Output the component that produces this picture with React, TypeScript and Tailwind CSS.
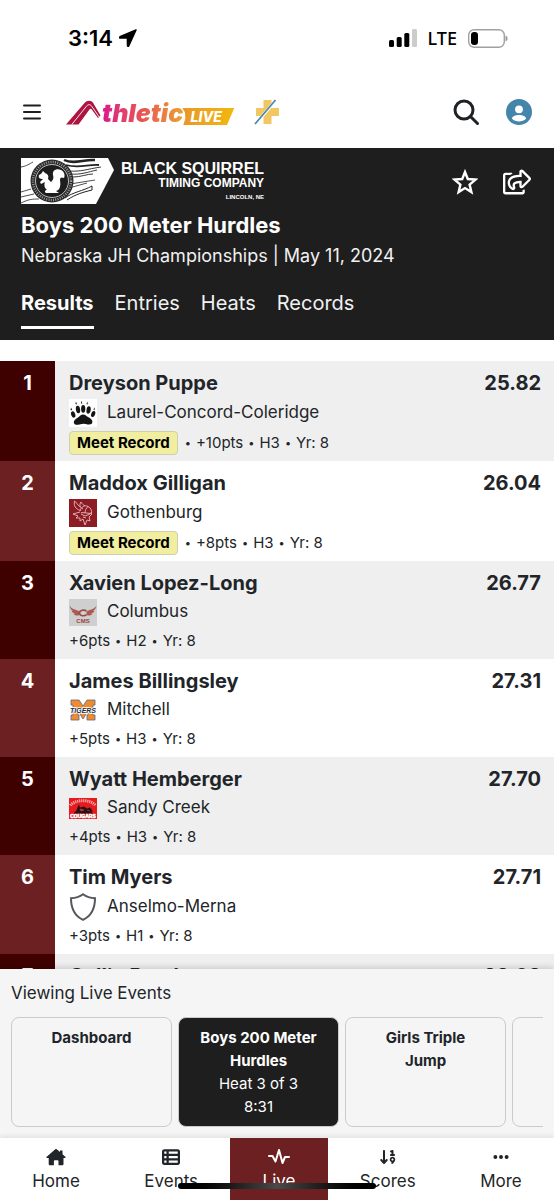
import React from "react";
import { FaRegShareSquare } from "react-icons/fa";
import { FaTableList, FaArrowDown19, FaEllipsis } from "react-icons/fa6";

type Result = {
  place: number;
  name: string;
  school: string;
  time: string;
  details: string[];
  record?: boolean;
  logo: React.ReactNode;
  compact?: boolean;
};

const PawLogo = () => (
  <svg viewBox="0 0 28 28" className="size-7">
    <rect width="28" height="28" fill="#fff" />
    <g fill="#151515">
      <path d="M14 15.500c2.200 0 3.100 1.400 5 2.600 2.600 1.500 4.600 2.600 4.400 5-.2 2.300-2.400 2.900-4.700 2.300-3-.8-5.200-.8-8.200.1C7.600 26.300 5 25.900 4.800 23.500c-.2-2.300 2-3.300 4.200-4.900 1.900-1.400 2.800-3.100 5-3.100z" />
      <ellipse cx="4.200" cy="15.500" rx="2" ry="3.200" transform="rotate(-20 4.200 15.500)" />
      <ellipse cx="9" cy="10.500" rx="2.100" ry="3.800" transform="rotate(-8 9 10.500)" />
      <ellipse cx="14.200" cy="9.800" rx="2.100" ry="3.900" />
      <ellipse cx="19.600" cy="11" rx="2.100" ry="3.700" transform="rotate(10 19.600 11)" />
      <ellipse cx="24.200" cy="15" rx="1.900" ry="3.200" transform="rotate(20 24.200 15)" />
      <path d="M2 8.500l1.300 2.800-1.800-.3zM7 2.500l1 3-1.600-.5zM12.500 1.800l.9 2.700h-1.500zM18.500 2.500l.2 3-1.300-.6zM26 8.200l-.6 3-1.100-.8z" />
    </g>
  </svg>
);

const VikingLogo = () => (
  <svg viewBox="0 0 28 28" className="size-7">
    <rect width="28" height="28" fill="#8c1b24" />
    <g fill="none" stroke="#e8babc" strokeWidth=".9" strokeLinejoin="round">
      <path d="M5.500 2c-1 5 1 8 6 9.500M5.500 2c2 1 2.500 4 6 6M12 3c-2 3-1 6 2 7M12 3c1 2 2.500 3 4 4" />
      <path d="M11 12c1-4 5-6.500 8-4.500 3 1.500 4 4 3.500 7L12 13.500M19 7.500c-2 2-3 4-3 6.500" />
      <path d="M11 13l-7 2 5 2-2 2h4v3l3-2 2 6 2-5 3 1-1-4 3-3-2-1M12 15l4 2 5-2M14 18l3 1" />
    </g>
  </svg>
);

const ColumbusLogo = () => (
  <svg viewBox="0 0 28 27" className="h-[27px] w-7">
    <rect width="28" height="27" fill="#cfcfcf" />
    <path d="M.5 6.500C3 11 7 10 10.500 12.500v3.500C8 17 6 16.500 4.500 15l1.800-.2C4 14.300 3 13 2.500 11.800l2 .4C2 11 .8 9 .5 6.500zM27.500 6.500C25 11 21 10 17.500 12.500v3.500c2.500 1 4.500.5 6-1l-1.800-.2c2.300-.5 3.300-1.800 3.800-3l-2 .4c2.500-1.200 3.700-3.200 4-5.700z" fill="#ab5a52" />
    <path d="M17.500 12.200c-2-1.800-7-1.400-7 1.800s5 3.500 7 1.600" fill="none" stroke="#9b4a44" strokeWidth="1.600" />
    <text x="14" y="23.500" textAnchor="middle" fontFamily="Liberation Sans, sans-serif" fontWeight="700" fontSize="6" fill="#98423d">CMS</text>
  </svg>
);

const TigersLogo = () => (
  <svg viewBox="0 0 28 22" className="h-[22px] w-7">
    <path d="M2 1h8l4 6 4-6h8v5h-2v10h2v5h-8v-5h1v-4l-5 8-5-8v4h1v5H2v-5h2V6H2z" fill="#f28a30" stroke="#596880" strokeWidth=".8" />
    <text x="14" y="14" textAnchor="middle" fontFamily="Liberation Sans, sans-serif" fontWeight="700" fontStyle="italic" fontSize="7" stroke="#fff" strokeWidth="1.600" paintOrder="stroke" fill="#222c3c">TIGERS</text>
  </svg>
);

const CougarsLogo = () => (
  <svg viewBox="0 0 28 21" className="h-[21px] w-7">
    <rect width="28" height="21" fill="#e51b20" />
    <path d="M1.500 7.500C6 1 22 1 26.500 7.500" fill="none" stroke="#f8a5a5" strokeWidth="3" strokeDasharray="1.200 .8" />
    <path d="M5 15.500c1-3 3-2 3-5l2-4 1 3 4-1 3 2 3-1 3 4h-2l2 2z" fill="#2a1212" />
    <path d="M11 11l4 1-3 1zM18 12l3 1" fill="#c33" stroke="#b55" strokeWidth=".5" />
    <text x="14" y="20" textAnchor="middle" fontFamily="Liberation Sans, sans-serif" fontWeight="700" fontSize="5" fill="#fff" stroke="#fff" strokeWidth=".5">COUGARS</text>
  </svg>
);

const ShieldLogo = () => (
  <svg viewBox="0 0 28 28" className="size-7" fill="none" stroke="#55585b" strokeWidth="2">
    <path d="M14 1.300c3.500 2.500 7.500 3.700 12 4C26 14 23.500 22.500 14 26.800 4.500 22.500 2 14 2 5.300c4.500-.3 8.500-1.500 12-4z" />
  </svg>
);

const results: Result[] = [
  { place: 1, name: "Dreyson Puppe", school: "Laurel-Concord-Coleridge", time: "25.82", details: ["+10pts", "H3", "Yr: 8"], record: true, logo: <PawLogo /> },
  { place: 2, name: "Maddox Gilligan", school: "Gothenburg", time: "26.04", details: ["+8pts", "H3", "Yr: 8"], record: true, logo: <VikingLogo /> },
  { place: 3, name: "Xavien Lopez-Long", school: "Columbus", time: "26.77", details: ["+6pts", "H2", "Yr: 8"], logo: <ColumbusLogo />, compact: true },
  { place: 4, name: "James Billingsley", school: "Mitchell", time: "27.31", details: ["+5pts", "H3", "Yr: 8"], logo: <TigersLogo />, compact: true },
  { place: 5, name: "Wyatt Hemberger", school: "Sandy Creek", time: "27.70", details: ["+4pts", "H3", "Yr: 8"], logo: <CougarsLogo />, compact: true },
  { place: 6, name: "Tim Myers", school: "Anselmo-Merna", time: "27.71", details: ["+3pts", "H1", "Yr: 8"], logo: <ShieldLogo /> },
  { place: 7, name: "Collin Reed", school: "", time: "28.02", details: [], logo: null },
];

const StatusBar = () => (
  <div className="flex h-[76px] shrink-0 items-center justify-between pr-[46px] pl-[68px] text-black">
    <div className="flex items-center gap-1.5">
      <span className="text-[22px] font-semibold">3:14</span>
      <svg viewBox="0 0 18 18" className="size-[18px]">
        <path d="M17 1L1 7.800c-.8.5-.6 1.300.3 1.300h7.100l.1 7.400c0 1 .9 1.100 1.300.2z" fill="#000" stroke="#000" strokeLinejoin="round" strokeWidth="1.500" />
      </svg>
    </div>
    <div className="flex items-center">
      <svg viewBox="0 0 28 18" className="h-[18px] w-7">
        <rect x="0" y="11" width="5" height="7" rx="1.500" />
        <rect x="7.700" y="8" width="5" height="10" rx="1.500" />
        <rect x="15.300" y="4" width="5" height="14" rx="1.500" />
        <rect x="23" y="0" width="5" height="18" rx="1.500" fill="#ccc" />
      </svg>
      <span className="ml-[11px] font-['Noto_Sans',sans-serif] text-[18px] font-medium">LTE</span>
      <svg viewBox="0 0 40 19" className="ml-[11px] h-[19px] w-10">
        <rect x=".7" y=".7" width="35.600" height="17.600" rx="5.500" fill="none" stroke="#a0a0a0" strokeWidth="1.400" />
        <rect x="3" y="3" width="7" height="13" rx="3.200" />
        <path d="M37.500 6.500c2.800.8 2.800 5.200 0 6z" fill="#999" />
      </svg>
    </div>
  </div>
);

const BrandLogo = () => (
  <a href="#" aria-label="AthleticLIVE" className="flex items-end">
    <svg viewBox="0 0 36 25" className="h-[25px] w-9" fill="none">
      <path d="M0 24.500L18.500 3C21 .2 25.300 0 27.200 3L34.500 15.500 32 18 25.800 9.500c-.8-1-1.600-.8-2.300 0L12.500 24.500z" fill="#ad1440" />
      <path d="M5.800 24.500L20.500 6.200c1.900-2.200 4-1.900 5.300.2L33.500 17.500" stroke="#fff" strokeWidth=".9" />
    </svg>
    <span className="bg-linear-to-r from-[#d9148a] via-[#e8534e] to-[#eda02e] bg-clip-text pr-px text-[25px] leading-6 font-black text-transparent italic">thletic</span>
    <span className="-ml-0.5 flex h-[17px] w-[52px] items-center justify-center bg-linear-to-r from-[#e99725] to-[#f1b80c] pr-1 text-[14px] font-extrabold text-white italic [clip-path:polygon(0_0,100%_0,86%_100%,2%_100%,6%_60%,5%_25%)]">LIVE</span>
    <svg viewBox="0 0 26 26" className="ml-5 size-[26px]">
      <path d="M9.500 1h8v8H25v8h-7.500v8h-8v-8H2V9h7.500z" fill="#f2c761" />
      <path d="M1 25.500L22 1" stroke="#fff" strokeWidth="3" />
      <path d="M1 25L21.500 1" stroke="#4c88a7" strokeWidth="1.800" />
    </svg>
  </a>
);

const SponsorLogo = () => (
  <div className="flex gap-[7px] text-white">
    <svg viewBox="0 0 93 46" className="h-[46px] w-[93px]">
      <path d="M0 0h87l6 12-18 34H0z" fill="#fff" />
      <g stroke="#222" fill="none">
        <path d="M43 2c10 5 20-1 31 0" strokeWidth="2.500" />
        <path d="M45 7c13 4 22-1 33 0" strokeWidth="1.800" />
        <path d="M48 13c12 1 18-2 32-4M50 16c9 1 17-2 26-4M52 19c8 0 14-3 20-3" strokeWidth=".9" />
        <path d="M49 26l25-4M48 30l18-5" strokeWidth=".8" />
        <path d="M44 40c8-6 18-7 27-12v4c-8 2-16 4-25 10" strokeWidth="1" />
        <path d="M0 9c6-1 8-3 12-5M0 34l10-3M0 39l13-3M0 45c8-4 12-4 18-4" strokeWidth=".8" />
      </g>
      <circle cx="31" cy="23" r="21.500" fill="#292929" />
      <circle cx="31" cy="23" r="19" fill="none" stroke="#999" strokeWidth="2.500" strokeDasharray="1 1.300" />
      <circle cx="31" cy="23" r="16.500" fill="#1d1d1d" stroke="#ddd" strokeWidth=".8" />
      <path d="M18 17c2-1 3-2 4-4l2 2c3 1 4 3 3 6l3 3c2-2 3-4 2-7-1-5 4-7 8-5 4 2 4 6 3 8-2-1-4-1-4 2 1 6 0 10-4 11l3 2H25c-2-1-1-3 1-3-3-3-3-5-2-8l-4 2-1-2 3-3c-3 0-5-1-4-4z" fill="#fff" />
    </svg>
    <div className="flex flex-col items-end pt-[3px] font-['Liberation_Sans',Arial,sans-serif] font-bold">
      <span className="text-[16px] leading-4">BLACK SQUIRREL</span>
      <span className="text-[12px] leading-[13px]">TIMING COMPANY</span>
      <span className="mt-[3px] text-[6px] leading-2">LINCOLN, NE</span>
    </div>
  </div>
);

const EventHeader = () => (
  <section className="shrink-0 bg-[#1e1e1e] px-[21px] pt-[10px] pb-[11px] text-white">
    <div className="flex items-start justify-between">
      <SponsorLogo />
      <div className="flex items-center gap-[25px] pt-[10px] pr-0.5">
        <button aria-label="Favorite">
          <svg viewBox="0 0 26 26" className="block size-[26px]" fill="none" stroke="#fff" strokeWidth="2.400">
            <path d="M13 3l2.800 7 7.700.6-5.900 5 1.800 7.500-6.400-4-6.400 4 1.800-7.500-5.900-5 7.700-.6z" />
          </svg>
        </button>
        <button aria-label="Share"><FaRegShareSquare className="block size-7" /></button>
      </div>
    </div>
    <h1 className="mt-[5px] text-[22px] leading-8 font-bold">Boys 200 Meter Hurdles</h1>
    <p className="text-[18px] leading-[30px] text-[#f1f1f1]">Nebraska JH Championships | May 11, 2024</p>
    <nav className="mt-4 flex gap-[21px] text-[20px] leading-8">
      <a href="#results" className="border-b-3 border-white pb-[7px] font-bold">Results</a>
      <a href="#entries" className="text-[#f1f1f1]">Entries</a>
      <a href="#heats" className="text-[#f1f1f1]">Heats</a>
      <a href="#records" className="text-[#f1f1f1]">Records</a>
    </nav>
  </section>
);

const Details = ({ items, leading }: { items: string[]; leading?: boolean }) => (
  <>
    {items.map((item, i) => (
      <React.Fragment key={item}>
        {(leading || i > 0) && <span className="text-[11px]">•</span>}
        <span>{item}</span>
      </React.Fragment>
    ))}
  </>
);

const ResultRow = ({ result: r }: { result: Result }) => (
  <li className="group flex odd:bg-[#efefef] even:bg-white">
    <span className="w-[55px] shrink-0 bg-[#6c2021] pt-2 text-center text-[20px] leading-7 font-bold text-white group-odd:bg-[#3f0000]">{r.place}</span>
    <div className="flex-1 pt-2 pr-[13px] pb-[3px] pl-[14px]">
      <div className="flex justify-between text-[20px] leading-7 font-bold">
        <h2>{r.name}</h2>
        <span>{r.time}</span>
      </div>
      <div className={`flex items-center gap-[10px] text-[17px] ${r.compact ? "h-[30px]" : "h-[31px]"}`}>
        {r.logo}
        <span>{r.school}</span>
      </div>
      <div className={`flex items-center gap-[5px] text-[15px] ${r.record ? "h-[30px]" : "h-[29px]"}`}>
        {r.record && <strong className="mr-0.5 rounded-sm border border-[#cfcfae] bg-[#f1ee9f] px-[7px] leading-[22px] font-bold text-black">Meet Record</strong>}
        <Details items={r.details} leading={r.record} />
      </div>
    </div>
  </li>
);

const eventCard = "flex h-[110px] w-[161px] shrink-0 flex-col items-center rounded-lg border border-[#cbcbcb] px-3 pt-2 text-center text-[15px] leading-[23px]";

const LivePanel = () => (
  <section className="relative shrink-0 bg-[#f5f5f5] pt-2 pr-[11px] pb-[11px] pl-[11px] shadow-[0_-2px_6px_rgba(0,0,0,0.15)]">
    <h2 className="text-[17px] leading-8">Viewing Live Events</h2>
    <div className="mt-2 flex gap-1.5 overflow-hidden">
      <button className={eventCard}><strong className="font-bold">Dashboard</strong></button>
      <button className={`${eventCard} bg-[#1e1e1e] text-white`}>
        <strong className="font-bold">Boys 200 Meter Hurdles</strong>
        <span>Heat 3 of 3</span>
        <span>8:31</span>
      </button>
      <button className={eventCard}><strong className="font-bold">Girls Triple<br />Jump</strong></button>
      <button aria-label="Next event" className={eventCard} />
    </div>
  </section>
);

const tabClass = "flex flex-auto flex-col items-center pt-[10px] text-[17px] leading-[30px]";

const BottomNav = () => (
  <nav className="relative flex h-[62px] shrink-0 bg-white shadow-[0_-2px_5px_rgba(0,0,0,0.08)]">
    <a href="#home" className={tabClass}>
      <svg viewBox="0 0 20 18" className="h-[18px] w-5" fill="currentColor">
        <path d="M9.300 1.200c.4-.4 1-.4 1.400 0L14 4V2.500h2.500v3.700l2.800 2.500c.6.500.2 1.400-.5 1.400h-1.300V16c0 .8-.5 1.300-1.300 1.300h-3.700v-4c0-.7-.4-1.100-1.100-1.100H9c-.7 0-1.100.4-1.100 1.100v4H4c-.8 0-1.300-.5-1.300-1.300v-5.900H1.200c-.7 0-1.100-.9-.5-1.400z" />
      </svg>
      <span>Home</span>
    </a>
    <a href="#events" className={tabClass}><FaTableList className="size-[18px]" /><span>Events</span></a>
    <a href="#live" className={`${tabClass} bg-[#6c2021] text-white`}>
      <svg viewBox="0 0 22 18" className="h-[18px] w-[22px]" fill="none" stroke="currentColor" strokeWidth="2" strokeLinejoin="round" strokeLinecap="round">
        <path d="M1 8h3.500l3 5.500L11 2l3.500 13L17 9h4" />
      </svg>
      <span>Live</span>
    </a>
    <a href="#scores" className={tabClass}><FaArrowDown19 className="size-[18px]" /><span>Scores</span></a>
    <a href="#more" className={tabClass}><FaEllipsis className="h-[18px] w-4" /><span>More</span></a>
    <div className="absolute bottom-[11px] left-1/2 h-[6px] w-[198px] -translate-x-1/2 rounded-full bg-linear-to-r from-black via-[#4a4a4a] to-black" />
  </nav>
);

export default function App() {
  return (
    <div className="flex h-screen flex-col overflow-hidden bg-white font-['Inter',sans-serif] text-[#212529]">
      <StatusBar />
      <header className="flex h-[72px] shrink-0 items-center justify-between pr-[22px] pl-[23px]">
        <div className="flex items-center gap-[25px]">
          <button aria-label="Menu">
            <svg viewBox="0 0 18 16" className="block h-4 w-[18px]" stroke="#1d1f22" strokeWidth="2" strokeLinecap="round">
              <path d="M1 1.500h16M1 8h16M1 14.500h16" />
            </svg>
          </button>
          <BrandLogo />
        </div>
        <div className="flex items-center gap-[26px]">
          <button aria-label="Search">
            <svg viewBox="0 0 27 27" className="block size-[27px]" fill="none" stroke="#1f2225" strokeWidth="3" strokeLinecap="round">
              <circle cx="11" cy="11" r="9" />
              <path d="M18 18l6.500 6.500" />
            </svg>
          </button>
          <button aria-label="Account">
            <svg viewBox="0 0 26 26" className="block size-[26px]">
              <circle cx="13" cy="13" r="13" fill="#4584ab" />
              <circle cx="13" cy="10.300" r="3.900" fill="#fff" />
              <path d="M6 19.800c0-5 14-5 14 0-3.500 3.600-10.500 3.600-14 0z" fill="#fff" />
            </svg>
          </button>
        </div>
      </header>
      <EventHeader />
      <main className="min-h-0 flex-1 overflow-hidden pt-[21px]">
        <ol>
          {results.map((r) => <ResultRow key={r.place} result={r} />)}
        </ol>
      </main>
      <LivePanel />
      <BottomNav />
    </div>
  );
}
